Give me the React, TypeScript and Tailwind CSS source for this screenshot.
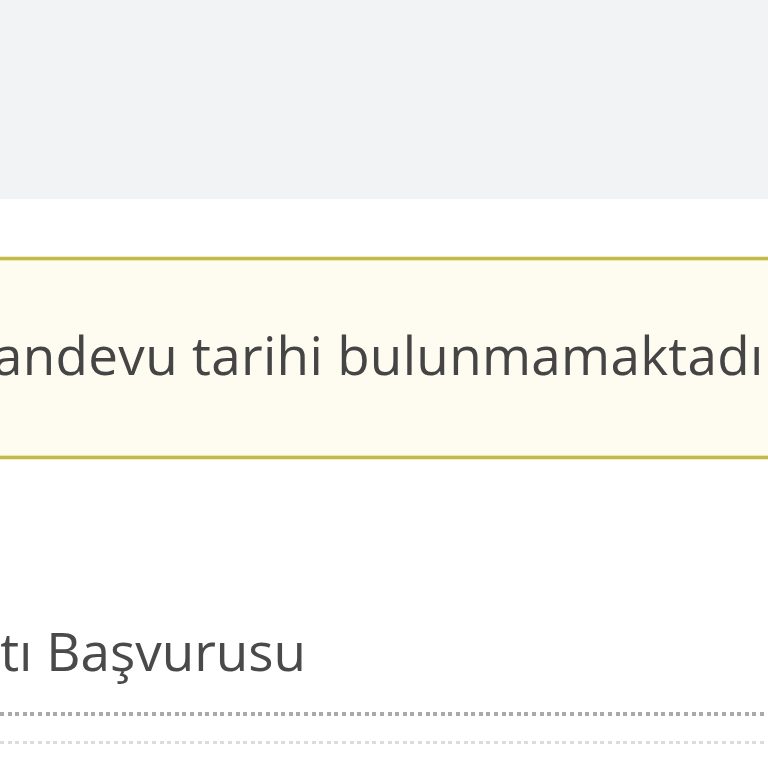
import React from "react";

export default function App() {
  return (
    <div className="w-[768px] h-[768px] overflow-hidden bg-white flex flex-col" style={{ fontFamily: '"Open Sans", "Noto Sans", sans-serif' }}>
      <div className="h-[199px] bg-[#f2f3f5] shrink-0" />
      <div className="h-[57px] shrink-0" />
      <div className="border-y border-[#f4efb8] shrink-0">
        <div className="border-y-[3px] border-[#c2b955]">
          <div className="border-y border-[#eee8a6] bg-[#fefbf0] h-[196px] flex items-center overflow-hidden">
            <div className="whitespace-nowrap text-[53px] leading-none tracking-[0.3px] text-[#454545] ml-[-40px] mt-[-8px]">
              Randevu tarihi bulunmamaktadır.
            </div>
          </div>
        </div>
      </div>
      <div className="h-[252px] shrink-0 flex items-end overflow-hidden">
        <div className="whitespace-nowrap text-[53px] leading-none text-[#4a4a4a] ml-[-293px] mb-[35px]">
          Oturum Kartı Başvurusu
        </div>
      </div>
      <div className="h-[4px] shrink-0 bg-[repeating-linear-gradient(90deg,#a9a9a9_0_4px,transparent_4px_7.6px)]" />
      <div className="h-[25px] shrink-0" />
      <div className="h-[3px] shrink-0 bg-[repeating-linear-gradient(90deg,#dcdcdc_0_4px,transparent_4px_7.6px)]" />
    </div>
  );
}
